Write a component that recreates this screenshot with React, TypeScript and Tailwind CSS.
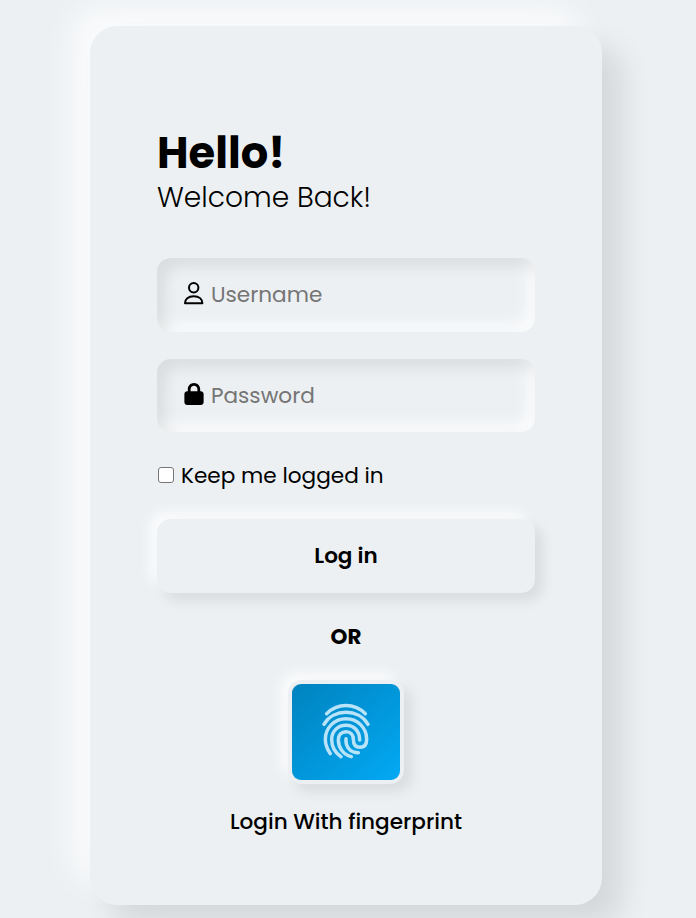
import { FaLock } from "react-icons/fa6";

const field =
  "flex items-center rounded-[14px] pl-[27px] shadow-[inset_7px_7px_16px_rgba(0,0,0,0.09),inset_-7px_-7px_16px_rgba(255,255,255,0.85)]";
const raised =
  "shadow-[7px_7px_14px_rgba(0,0,0,0.09),-7px_-7px_14px_rgba(255,255,255,0.8)]";

function UserIcon() {
  return (
    <svg viewBox="0 0 20 23" className="-mt-[4px] h-[23px] w-[20px]" fill="none" stroke="currentColor" strokeWidth="2" strokeLinejoin="round">
      <circle cx="9.7" cy="5.8" r="4.7" />
      <path d="M1 21.2C1 17.2 4.2 14.2 9.7 14.2S18.4 17.2 18.4 21.2Z" />
    </svg>
  );
}

function Fingerprint() {
  return (
    <svg viewBox="0 0 180 198" className="mt-[-2px] h-[66px] w-[60px]" fill="none" stroke="#b9e3f8" strokeWidth="10.5" strokeLinecap="round">
      <path d="M32 47C64 14 116 14 148 47" />
      <path d="M24 79C52 31 128 31 156 79" />
      <path d="M43 167C33 153 28 140 28 124C28 89 56 62 90 62S152 89 152 124C152 139 145 148 132 148S112 139 112 124C112 110 103 101 90 101S67 110 67 126C67 149 82 170 106 176" />
      <path d="M75 176C56 164 47 145 47 124C47 99 66 82 90 82S131 99 131 126" />
      <path d="M90 122C88 147 103 164 127 164" />
    </svg>
  );
}

export default function App() {
  return (
    <div className="h-[918px] overflow-hidden bg-[#ecf0f3] pt-[26px] pl-[90px] font-['Poppins','Inter',sans-serif] text-black">
      <main className="flex h-[879px] w-[512px] flex-col rounded-[27px] bg-[#ecf0f3] px-[67px] pt-[105px] shadow-[20px_20px_30px_rgba(0,0,0,0.1),-20px_-20px_30px_rgba(255,255,255,0.7)]">
        <h1 className="h-[46px] text-[43.2px] leading-[45px] font-bold">Hello!</h1>
        <p className="mt-[3px] h-[36px] text-[28.1px] leading-[34px] font-light">Welcome Back!</p>
        <div className={`mt-[42px] h-[74px] ${field}`}>
          <UserIcon />
          <input
            className="ml-[7px] w-[260px] bg-transparent text-[21.6px] outline-none placeholder:text-[#757575]"
            placeholder="Username"
          />
        </div>
        <div className={`mt-[27px] h-[73px] ${field}`}>
          <FaLock className="-mt-[3px] h-[22px] w-[20px]" />
          <input
            className="mt-[2px] ml-[7px] w-[260px] bg-transparent text-[21.6px] outline-none placeholder:text-[#757575]"
            placeholder="Password"
          />
        </div>
        <label className="mt-[27px] flex h-[33px] items-center text-[21.6px]">
          <input
            type="checkbox"
            className="-mt-px mr-[7px] ml-px h-4 w-4 appearance-none rounded-[3px] border border-[#767676] bg-white"
          />
          <span className="pt-[2px]">Keep me logged in</span>
        </label>
        <button className={`mt-[27px] h-[74px] rounded-[14px] text-[21.5px] font-semibold ${raised}`}>Log in</button>
        <p className="mt-[27px] h-[33px] text-center text-[21.5px] leading-[33px] font-bold">OR</p>
        <button
          className={`mt-[27px] flex h-[104px] w-[116px] items-center justify-center self-center rounded-[14px] bg-[#ecf0f3] p-[4px] ${raised}`}
        >
          <span className="flex h-full w-full items-center justify-center rounded-[9px] bg-linear-to-br from-[#0083bf] to-[#03a9f4]">
            <Fingerprint />
          </span>
        </button>
        <p className="mt-[21px] h-[33px] text-center text-[21.6px] leading-[33px] font-medium">Login With fingerprint</p>
      </main>
    </div>
  );
}
